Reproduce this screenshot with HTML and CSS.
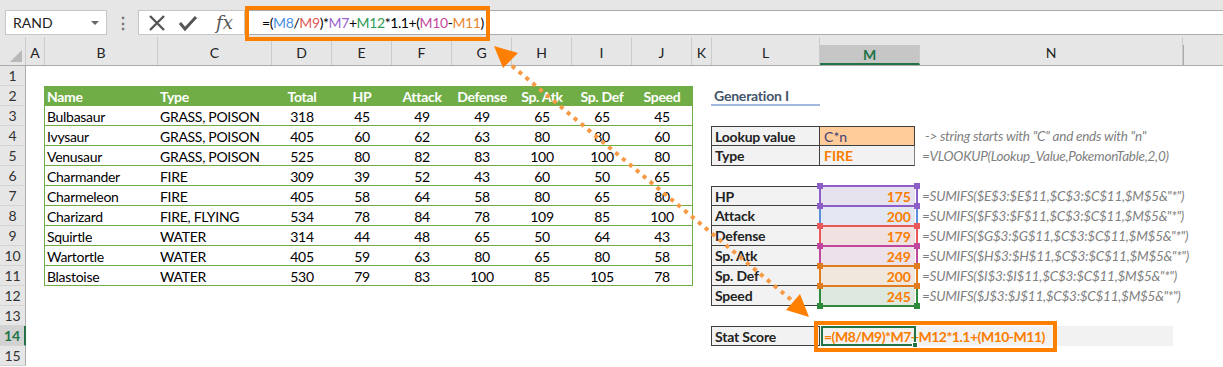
FILE: index.html
```html
<!DOCTYPE html>
<html>
<head>
<meta charset="utf-8">
<link rel="stylesheet" href="styles.css">
</head>
<body>
<div class="page">
  <div class="fbar">
    <div class="namebox"><span>RAND</span><span class="dd"></span></div>
    <div class="vdots">⋮</div>
    <div class="fbtns">
      <svg class="ico" width="18" height="18" viewBox="0 0 18 18"><path d="M2 2 L16 16 M16 2 L2 16" stroke="#555" stroke-width="2.4" fill="none"/></svg>
      <svg class="ico" width="20" height="18" viewBox="0 0 20 18"><path d="M2 9 L7 15 L18 3" stroke="#555" stroke-width="3" fill="none"/></svg>
      <span class="fx">fx</span>
    </div>
    <div class="finput">
      <span class="ftext">=(<span class="r1">M8</span>/<span class="r2">M9</span>)*<span class="r3">M7</span>+<span class="r4">M12</span>*1.1+(<span class="r5">M10</span>-<span class="r6">M11</span>)</span><span class="caret"></span>
      <div class="callout top"></div>
    </div>
  </div>

  <div class="row colhdr">
    <div class="corner"><span class="tri"></span></div>
    <div class="ch">A</div><div class="ch">B</div><div class="ch">C</div><div class="ch">D</div><div class="ch">E</div><div class="ch">F</div><div class="ch">G</div><div class="ch">H</div><div class="ch">I</div><div class="ch">J</div><div class="ch">K</div><div class="ch">L</div><div class="ch sel">M</div><div class="ch">N</div><div class="ch last"></div>
  </div>

  <div class="row"><div class="rh">1</div></div>

  <div class="row"><div class="rh">2</div>
    <div class="tbl thead"><div class="tl">Name</div><div class="tl">Type</div><div>Total</div><div>HP</div><div>Attack</div><div>Defense</div><div>Sp. Atk</div><div>Sp. Def</div><div>Speed</div></div>
    <div class="cL gen">Generation I</div>
  </div>

  <div class="row"><div class="rh">3</div>
    <div class="tbl"><div class="tl">Bulbasaur</div><div class="tl">GRASS, POISON</div><div>318</div><div>45</div><div>49</div><div>49</div><div>65</div><div>65</div><div>45</div></div>
  </div>

  <div class="row"><div class="rh">4</div>
    <div class="tbl"><div class="tl">Ivysaur</div><div class="tl">GRASS, POISON</div><div>405</div><div>60</div><div>62</div><div>63</div><div>80</div><div>80</div><div>60</div></div>
    <div class="cL lab first">Lookup value</div>
    <div class="cM inp first">C*n</div>
    <div class="cN note">&nbsp;-&gt; string starts with "C" and ends with "n"</div>
  </div>

  <div class="row"><div class="rh">5</div>
    <div class="tbl"><div class="tl">Venusaur</div><div class="tl">GRASS, POISON</div><div>525</div><div>80</div><div>82</div><div>83</div><div>100</div><div>100</div><div>80</div></div>
    <div class="cL lab">Type</div>
    <div class="cM calc left">FIRE</div>
    <div class="cN note">=VLOOKUP(Lookup_Value,PokemonTable,2,0)</div>
  </div>

  <div class="row"><div class="rh">6</div>
    <div class="tbl"><div class="tl">Charmander</div><div class="tl">FIRE</div><div>309</div><div>39</div><div>52</div><div>43</div><div>60</div><div>50</div><div>65</div></div>
  </div>

  <div class="row"><div class="rh">7</div>
    <div class="tbl"><div class="tl">Charmeleon</div><div class="tl">FIRE</div><div>405</div><div>58</div><div>64</div><div>58</div><div>80</div><div>65</div><div>80</div></div>
    <div class="cL lab first">HP</div>
    <div class="cM calc hl h7">175<span class="box"><i class="k1"></i><i class="k2"></i><i class="k3"></i><i class="k4"></i></span></div>
    <div class="cN note">=SUMIFS($E$3:$E$11,$C$3:$C$11,$M$5&amp;"*")</div>
  </div>

  <div class="row"><div class="rh">8</div>
    <div class="tbl"><div class="tl">Charizard</div><div class="tl">FIRE, FLYING</div><div>534</div><div>78</div><div>84</div><div>78</div><div>109</div><div>85</div><div>100</div></div>
    <div class="cL lab">Attack</div>
    <div class="cM calc hl h8">200<span class="box"><i class="k1"></i><i class="k2"></i><i class="k3"></i><i class="k4"></i></span></div>
    <div class="cN note">=SUMIFS($F$3:$F$11,$C$3:$C$11,$M$5&amp;"*")</div>
  </div>

  <div class="row"><div class="rh">9</div>
    <div class="tbl"><div class="tl">Squirtle</div><div class="tl">WATER</div><div>314</div><div>44</div><div>48</div><div>65</div><div>50</div><div>64</div><div>43</div></div>
    <div class="cL lab">Defense</div>
    <div class="cM calc hl h9">179<span class="box"><i class="k1"></i><i class="k2"></i><i class="k3"></i><i class="k4"></i></span></div>
    <div class="cN note">=SUMIFS($G$3:$G$11,$C$3:$C$11,$M$5&amp;"*")</div>
  </div>

  <div class="row"><div class="rh">10</div>
    <div class="tbl"><div class="tl">Wartortle</div><div class="tl">WATER</div><div>405</div><div>59</div><div>63</div><div>80</div><div>65</div><div>80</div><div>58</div></div>
    <div class="cL lab">Sp. Atk</div>
    <div class="cM calc hl h10">249<span class="box"><i class="k1"></i><i class="k2"></i><i class="k3"></i><i class="k4"></i></span></div>
    <div class="cN note">=SUMIFS($H$3:$H$11,$C$3:$C$11,$M$5&amp;"*")</div>
  </div>

  <div class="row"><div class="rh">11</div>
    <div class="tbl"><div class="tl">Blastoise</div><div class="tl">WATER</div><div>530</div><div>79</div><div>83</div><div>100</div><div>85</div><div>105</div><div>78</div></div>
    <div class="cL lab">Sp. Def</div>
    <div class="cM calc hl h11">200<span class="box"><i class="k1"></i><i class="k2"></i><i class="k3"></i><i class="k4"></i></span></div>
    <div class="cN note">=SUMIFS($I$3:$I$11,$C$3:$C$11,$M$5&amp;"*")</div>
  </div>

  <div class="row"><div class="rh">12</div>
    <div class="cL lab">Speed</div>
    <div class="cM calc hl h12">245<span class="box"><i class="k1"></i><i class="k2"></i><i class="k3"></i><i class="k4"></i></span></div>
    <div class="cN note">=SUMIFS($J$3:$J$11,$C$3:$C$11,$M$5&amp;"*")</div>
  </div>

  <div class="row"><div class="rh">13</div></div>

  <div class="row"><div class="rh cur">14</div>
    <div class="cL lab first">Stat Score</div>
    <div class="cMN score">=(M8/M9)*M7+M12*1.1+(M10-M11)<span class="selbox"><i></i></span><span class="callout bot"></span></div>
  </div>

  <div class="row"><div class="rh">15</div></div>

  <svg class="arrow" width="1223" height="367" viewBox="0 0 1223 367">
    <line x1="505" y1="60" x2="795" y2="303" stroke="#f79a45" stroke-width="4" stroke-dasharray="4 5"/>
    <polygon points="494,46 518,53 503,68" fill="#ff8000"/>
    <polygon points="809,317 786,310 800,294" fill="#ff8000"/>
  </svg>
</div>
</body>
</html>
```

FILE: styles.css
```css
* { box-sizing: border-box; }
html, body { margin: 0; padding: 0; background: #ffffff; }
body { font-family: "Lato", "Open Sans", sans-serif; font-size: 14px; color: #000; }
.page { position: relative; width: 1223px; height: 367px; overflow: hidden; }

.fbar { height: 37px; background: #e6e6e6; display: flex; align-items: flex-start; padding-top: 10px; }
.namebox { margin-left: 5px; width: 102px; height: 25px; background: #fff; border: 1px solid #c6c6c6; display: flex; align-items: center; justify-content: space-between; padding: 0 7px 0 7px; font-size: 14px; color: #222; }
.dd { width: 0; height: 0; border-left: 4px solid transparent; border-right: 4px solid transparent; border-top: 4px solid #666; }
.vdots { width: 31px; text-align: center; color: #777; font-size: 16px; line-height: 25px; font-weight: bold; }
.fbtns { width: 107px; height: 25px; background: #fff; border: 1px solid #c6c6c6; display: flex; align-items: center; padding-left: 9px; gap: 12px; }
.fx { font-family: "DejaVu Serif", "Liberation Serif", serif; font-style: italic; font-size: 18px; color: #555; margin-left: 6px; line-height: 20px; }
.finput { position: relative; flex: 1; height: 25px; background: #fff; border-top: 1px solid #ababab; border-bottom: 1px solid #ababab; display: flex; align-items: center; padding-left: 17px; font-size: 14px; letter-spacing: -0.4px; color: #000; }
.caret { display: inline-block; width: 1px; height: 17px; background: #000; margin-left: 2px; }
.r1 { color: #4a8fe0; } .r2 { color: #e05a5a; } .r3 { color: #9a62d0; } .r4 { color: #2f9a55; } .r5 { color: #c3499e; } .r6 { color: #e6872f; }
.callout { position: absolute; border: 4px solid #ff8000; z-index: 5; }
.callout.top { left: 0; top: -5px; width: 245px; height: 35px; }

.row { display: grid; grid-template-columns: 26px 19px 113px 114px 60px 60px 60px 60px 60px 60px 60px 20px 108px 100px 263px 1fr; height: 20px; }
.colhdr { height: 29px; background: #e6e6e6; border-bottom: 1px solid #ababab; }
.ch { display: flex; align-items: center; justify-content: center; border-right: 1px solid #cbcbcb; font-size: 14px; color: #222; padding-top: 3px; }
.ch.sel { background: #c6c6c6; border-bottom: 2px solid #217346; color: #217346; font-weight: bold; margin-top: 8px; padding-top: 0; }
.ch.last { border-right: none; border-left: 1px solid #aaa; margin-top: 8px; }
.corner { position: relative; border-right: 1px solid #cbcbcb; }
.tri { position: absolute; right: 3px; bottom: 3px; width: 0; height: 0; border-left: 12px solid transparent; border-bottom: 12px solid #b8b8b8; }

.rh { grid-column: 1; background: #e6e6e6; border-right: 1px solid #ababab; border-bottom: 1px solid #d4d4d4; display: flex; align-items: center; justify-content: center; font-size: 14px; color: #333; }
.rh.cur { background: #d2d2d2; border-right: 2px solid #217346; color: #217346; font-weight: bold; }

.tbl { grid-column: 3 / 12; display: grid; grid-template-columns: 113px 114px 60px 60px 60px 60px 60px 60px 60px; border-left: 1px solid #70ad47; border-right: 1px solid #70ad47; border-bottom: 1px solid #70ad47; margin-right: -1px; margin-left: -1px; }
.tbl > div { display: flex; align-items: center; justify-content: center; font-size: 14px; letter-spacing: -0.3px; padding-top: 1px; }
.tbl > div.tl { justify-content: flex-start; padding-left: 2px; }
.tbl.thead { background: #70ad47; color: #fff; font-weight: bold; }

.cL { grid-column: 13; display: flex; align-items: center; font-size: 14px; letter-spacing: -0.2px; padding-left: 3px; }
.cM { grid-column: 14; display: flex; align-items: center; font-size: 14px; padding: 0 4px; position: relative; }
.cN { grid-column: 15; display: flex; align-items: center; white-space: nowrap; }
.cMN { grid-column: 14 / 16; }
.gen { color: #44546a; font-weight: bold; border-bottom: 2px solid #a2b8e1; margin-left: -1px; }
.lab { background: #f2f2f2; font-weight: bold; color: #222; border: 1px solid #3f3f3f; border-top: none; margin-left: -1px; }
.lab.first { border-top: 1px solid #3f3f3f; }
.cM.first, .cM.inp { border-top: 1px solid #3f3f3f; }
.cM.inp { background: #ffcc99; color: #3f3f76; border-right: 1px solid #3f3f3f; border-bottom: 1px solid #3f3f3f; margin-right: 5px; }
.cM.calc { background: #f2f2f2; color: #fa7d00; font-weight: bold; justify-content: flex-end; border-right: 1px solid #7f7f7f; border-bottom: 1px solid #3f3f3f; margin-right: 5px; }
.cM.calc.left { justify-content: flex-start; }
.note { font-style: italic; color: #7f7f7f; font-size: 13.5px; letter-spacing: -0.25px; padding-left: 2px; }

.hl { border: none !important; }
.h7 { background: #e7e3ee !important; }
.h8 { background: #e2e7f1 !important; }
.h9 { background: #f1e2e2 !important; }
.h10 { background: #eee2ea !important; }
.h11 { background: #f1e7dd !important; }
.h12 { background: #dfe8de !important; }
.box { position: absolute; left: -1px; right: -3px; top: -1px; bottom: -1px; border: 2px solid; }
.box i { position: absolute; width: 6px; height: 6px; background: currentColor; }
.box .k1 { left: -4px; top: -4px; } .box .k2 { right: -4px; top: -4px; }
.box .k3 { left: -4px; bottom: -4px; } .box .k4 { right: -4px; bottom: -4px; }
.h7 .box { color: #8e5ec8; border-color: #8e5ec8; z-index: 4; }
.h8 .box { color: #5b8fdd; border-color: #5b8fdd; z-index: 1; border-top-color: transparent; border-bottom-color: transparent; }
.h8 .box i { display: none; }
.h9 .box { color: #e8585b; border-color: #e8585b; z-index: 2; }
.h10 .box { color: #c0479e; border-color: #c0479e; z-index: 3; }
.h11 .box { color: #e07c1f; border-color: #e07c1f; z-index: 5; }
.h12 .box { color: #2d8a3a; border-color: #2d8a3a; z-index: 1; }

.score { position: relative; background: #f2f2f2; margin-right: 10px; color: #fa7d00; font-weight: bold; font-size: 14px; letter-spacing: -0.5px; display: flex; align-items: center; padding-left: 4px; white-space: nowrap; }
.selbox { position: absolute; left: 1px; top: 0; width: 95px; bottom: 0; border: 2px solid #217346; }
.selbox i { position: absolute; right: -4px; bottom: -4px; width: 6px; height: 6px; background: #217346; border: 1px solid #fff; }
.callout.bot { left: -6px; top: -5px; width: 243px; height: 31px; }

.arrow { position: absolute; left: 0; top: 0; pointer-events: none; z-index: 10; }
```
